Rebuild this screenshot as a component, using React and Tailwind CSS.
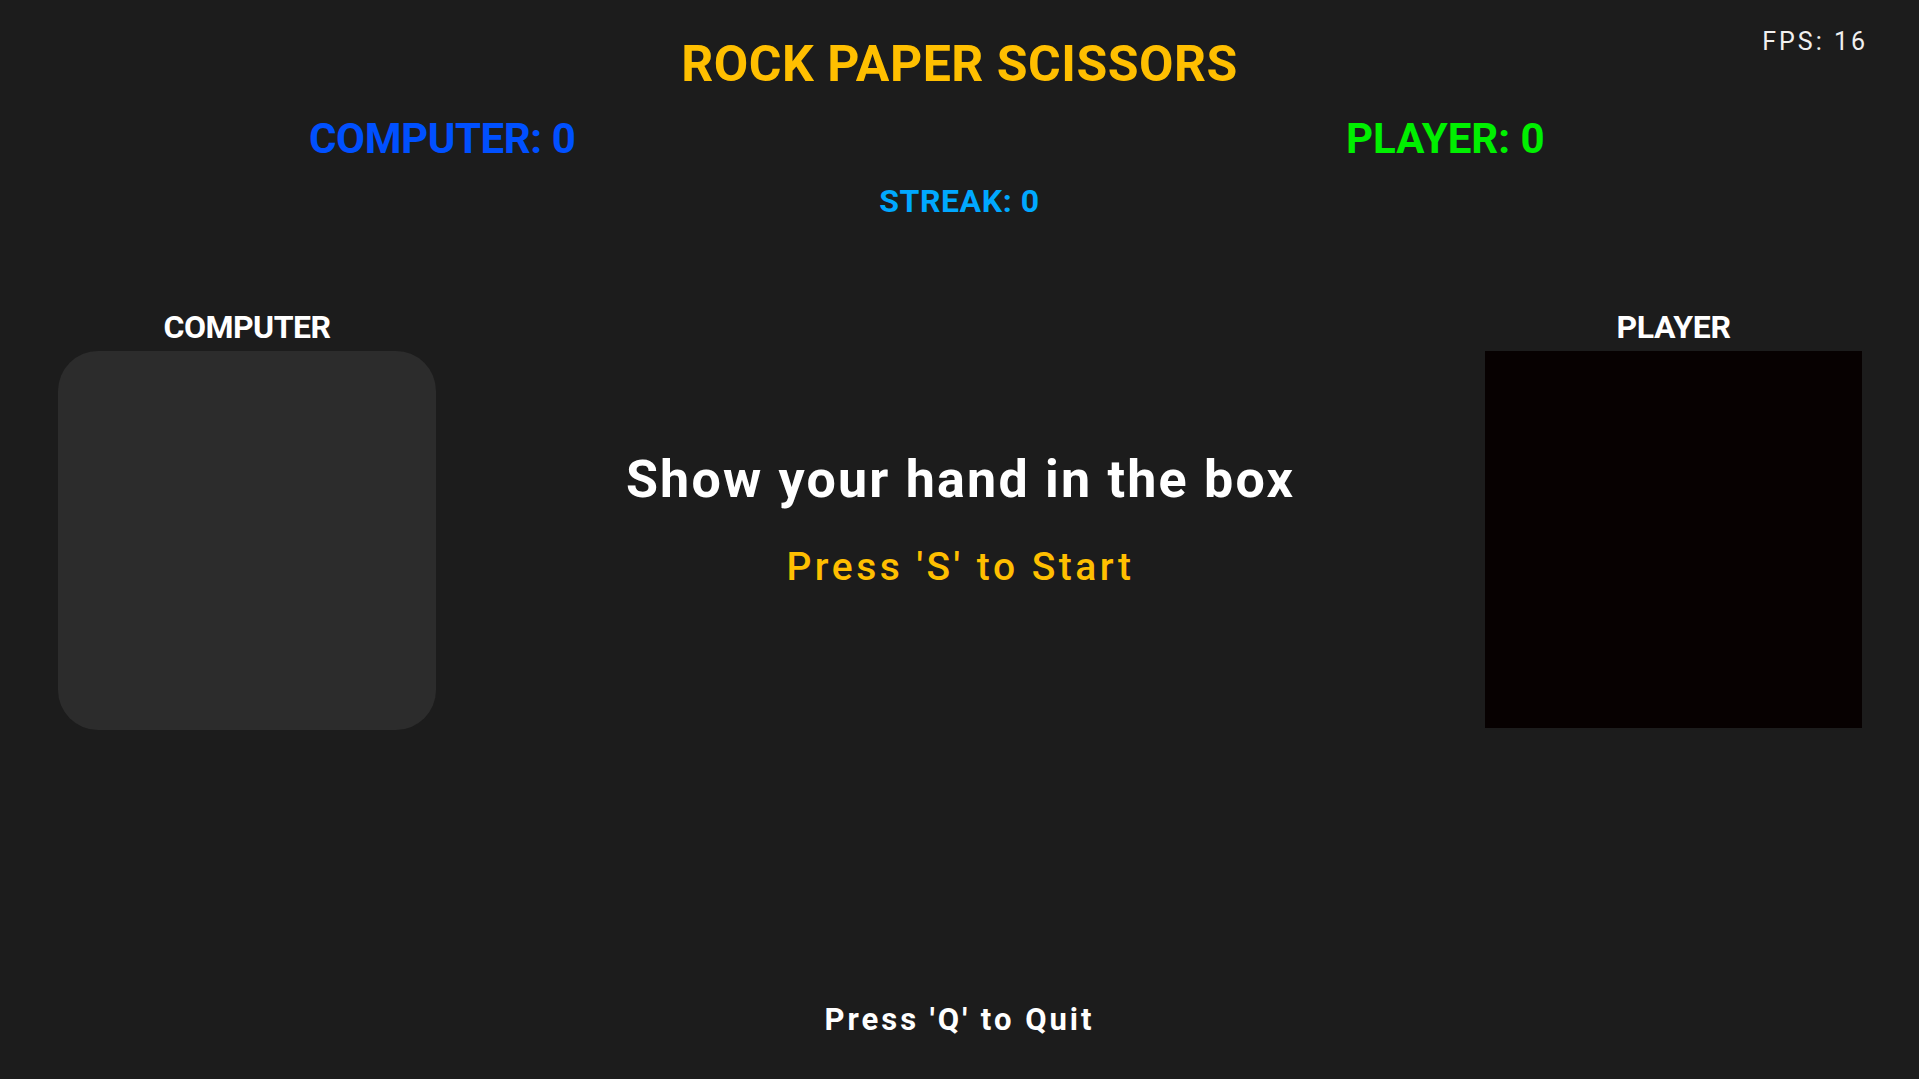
export default function App() {
  return (
    <div className="relative flex h-[1079px] w-full flex-col overflow-hidden bg-[#1c1c1c] font-['Roboto',sans-serif] text-white">
      <div className="absolute right-[51px] top-[29px] text-[25px] font-normal leading-none tracking-[3px] text-[#f0f0f0]">
        FPS: 16
      </div>

      <div className="pt-[39px] text-center text-[50px] font-bold leading-none tracking-[0.5px] text-[#ffbf00]">
        ROCK PAPER SCISSORS
      </div>

      <div className="mt-[29px] flex pl-[309px] text-[42px] font-bold leading-none">
        <div className="w-[1037px] tracking-[-0.4px] text-[#0050ff]">COMPUTER: 0</div>
        <div className="text-[#00f000]">PLAYER: 0</div>
      </div>

      <div className="mt-[25px] text-center text-[32px] font-bold leading-none tracking-[0.6px] text-[#00a8ff]">
        STREAK: 0
      </div>

      <div className="mt-[94px] flex pl-[58px] pr-[57px]">
        <div className="flex w-[378px] flex-col items-center">
          <div className="text-[32px] font-bold leading-none tracking-[-0.5px]">COMPUTER</div>
          <div className="mt-[8px] h-[379px] w-[378px] rounded-[40px] bg-[#2c2c2c]" />
        </div>

        <div className="flex flex-1 flex-col items-center pt-[143px]">
          <div className="text-[52px] font-bold leading-none tracking-[2.2px]">Show your hand in the box</div>
          <div className="mt-[42px] text-[39px] font-medium leading-none tracking-[3.5px] text-[#ffbf00]">
            Press 'S' to Start
          </div>
        </div>

        <div className="flex w-[377px] flex-col items-center">
          <div className="text-[32px] font-bold leading-none tracking-[-0.3px]">PLAYER</div>
          <div className="mt-[8px] h-[377px] w-[377px] bg-[#070101]" />
        </div>
      </div>

      <div className="mt-[274px] text-center text-[31px] font-bold leading-none tracking-[3px]">
        Press 'Q' to Quit
      </div>
    </div>
  );
}
